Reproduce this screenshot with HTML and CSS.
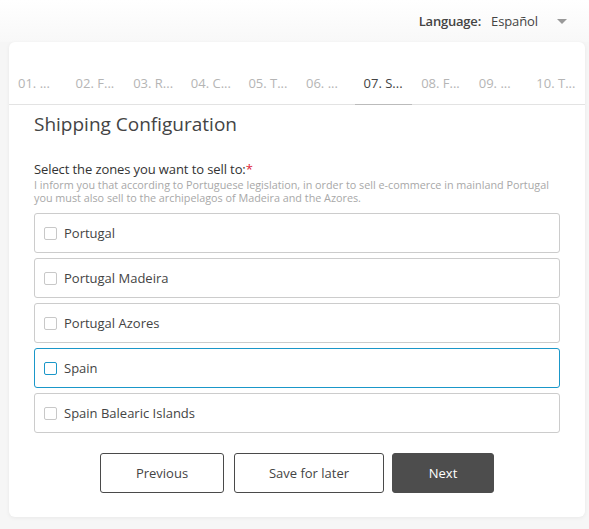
FILE: index.html
```html
<!DOCTYPE html>
<html lang="en">
<head>
<meta charset="utf-8">
<title>Shipping Configuration</title>
<meta name="viewport" content="width=device-width, initial-scale=1">
<link rel="stylesheet" href="styles.css">
</head>
<body>

<div class="topbar">
	<span class="lang-label">Language:</span>
	<span class="lang-select">Español <span class="caret"></span></span>
</div><!-- topbar -->

<div class="card">
	<ul class="steps">
		<li>01. ...</li>
		<li>02. F...</li>
		<li>03. R...</li>
		<li>04. C...</li>
		<li>05. T...</li>
		<li>06. ...</li>
		<li class="active">07. S...</li>
		<li>08. F...</li>
		<li>09. ...</li>
		<li>10. T...</li>
	</ul>

	<div class="content">
		<h2>Shipping Configuration</h2>

		<p class="field-label">Select the zones you want to sell to:<span class="req">*</span></p>
		<p class="help">I inform you that according to Portuguese legislation, in order to sell e-commerce in mainland Portugal you must also sell to the archipelagos of Madeira and the Azores.</p>

		<div class="zones">
			<label class="zone"><span class="box"></span>Portugal</label>
			<label class="zone"><span class="box"></span>Portugal Madeira</label>
			<label class="zone"><span class="box"></span>Portugal Azores</label>
			<label class="zone focus"><span class="box"></span>Spain</label>
			<label class="zone"><span class="box"></span>Spain Balearic Islands</label>
		</div><!-- zones -->

		<div class="actions">
			<button class="btn btn-prev">Previous</button>
			<button class="btn btn-save">Save for later</button>
			<button class="btn btn-next">Next</button>
		</div><!-- actions -->
	</div><!-- content -->
</div><!-- card -->

</body>
</html>
```

FILE: styles.css
```css
body {
	margin: 0; padding: 0;
	box-sizing: border-box;
	font-family: "Open Sans", "Liberation Sans", sans-serif;
	background: #f6f6f6;
	color: #333;
	min-height: 529px;
}

.topbar {
	display: flex;
	justify-content: flex-end;
	align-items: center;
	height: 42px;
	padding-right: 22px;
	font-size: 13px;
	background: linear-gradient(#fff, #f8f8f8);
}

	.lang-label {
		font-weight: 600;
		color: #444;
		margin-right: 10px;
		letter-spacing: -.2px;
	}

	.lang-select {
		display: flex;
		align-items: center;
		color: #444;
		letter-spacing: -.1px;
	}

	.caret {
		width: 0; height: 0;
		border-left: 5px solid transparent;
		border-right: 5px solid transparent;
		border-top: 5px solid #999;
		margin-left: 19px;
	}

.card {
	margin: 0 4px 0 9px;
	background: #fff;
	border-radius: 6px;
	box-shadow: 0 1px 4px rgba(0, 0, 0, .06);
	padding-bottom: 24px;
}

.steps {
	display: flex;
	list-style: none;
	margin: 0;
	padding: 32px 0 0;
	border-bottom: 1px solid #e3e3e3;
}

	.steps li {
		flex: 1;
		padding: 0 0 12px 9px;
		font-size: 13px;
		color: #b5b5b5;
		white-space: nowrap;
		margin-bottom: -1px;
		border-bottom: 1px solid transparent;
	}

	.steps li.active {
		color: #444;
		border-bottom-color: #bbb;
	}

.content {
	padding: 0 25px;
}

.content h2 {
	margin: 0;
	padding-top: 6px;
	font-size: 19px;
	font-weight: 400;
	color: #444;
	line-height: 26px;
}

p.field-label {
	margin: 23px 0 0;
	font-size: 13px;
	line-height: 18px;
	color: #333;
	letter-spacing: -.1px;
}

	.req {
		color: #e0243a;
	}

p.help {
	margin: 0 0 9px;
	font-size: 10.8px;
	line-height: 13px;
	color: #a8a8a8;
}

.zones {
	display: flex;
	flex-direction: column;
	gap: 5px;
}

	.zone {
		display: flex;
		align-items: center;
		height: 38px;
		border: 1px solid #ccc;
		border-radius: 3px;
		padding-left: 9px;
		font-size: 13px;
		color: #444;
	}

	.zone .box {
		width: 11px; height: 11px;
		border: 1px solid #c8c8c8;
		border-radius: 2px;
		margin-right: 7px;
	}

	.zone.focus {
		border-color: #1a97c9;
	}

	.zone.focus .box {
		border-color: #1a97c9;
	}

.actions {
	display: flex;
	justify-content: center;
	gap: 10px;
	margin-top: 20px;
}

	.btn {
		height: 40px;
		border: 1px solid #4a4a4a;
		border-radius: 3px;
		background: #fff;
		color: #444;
		font-family: inherit;
		font-size: 13px;
	}

	.btn-prev {
		width: 124px;
	}

	.btn-save {
		width: 150px;
	}

	.btn-next {
		width: 102px;
		margin-left: -2px;
		background: #4d4d4d;
		border-color: #4d4d4d;
		color: #fff;
	}
```
